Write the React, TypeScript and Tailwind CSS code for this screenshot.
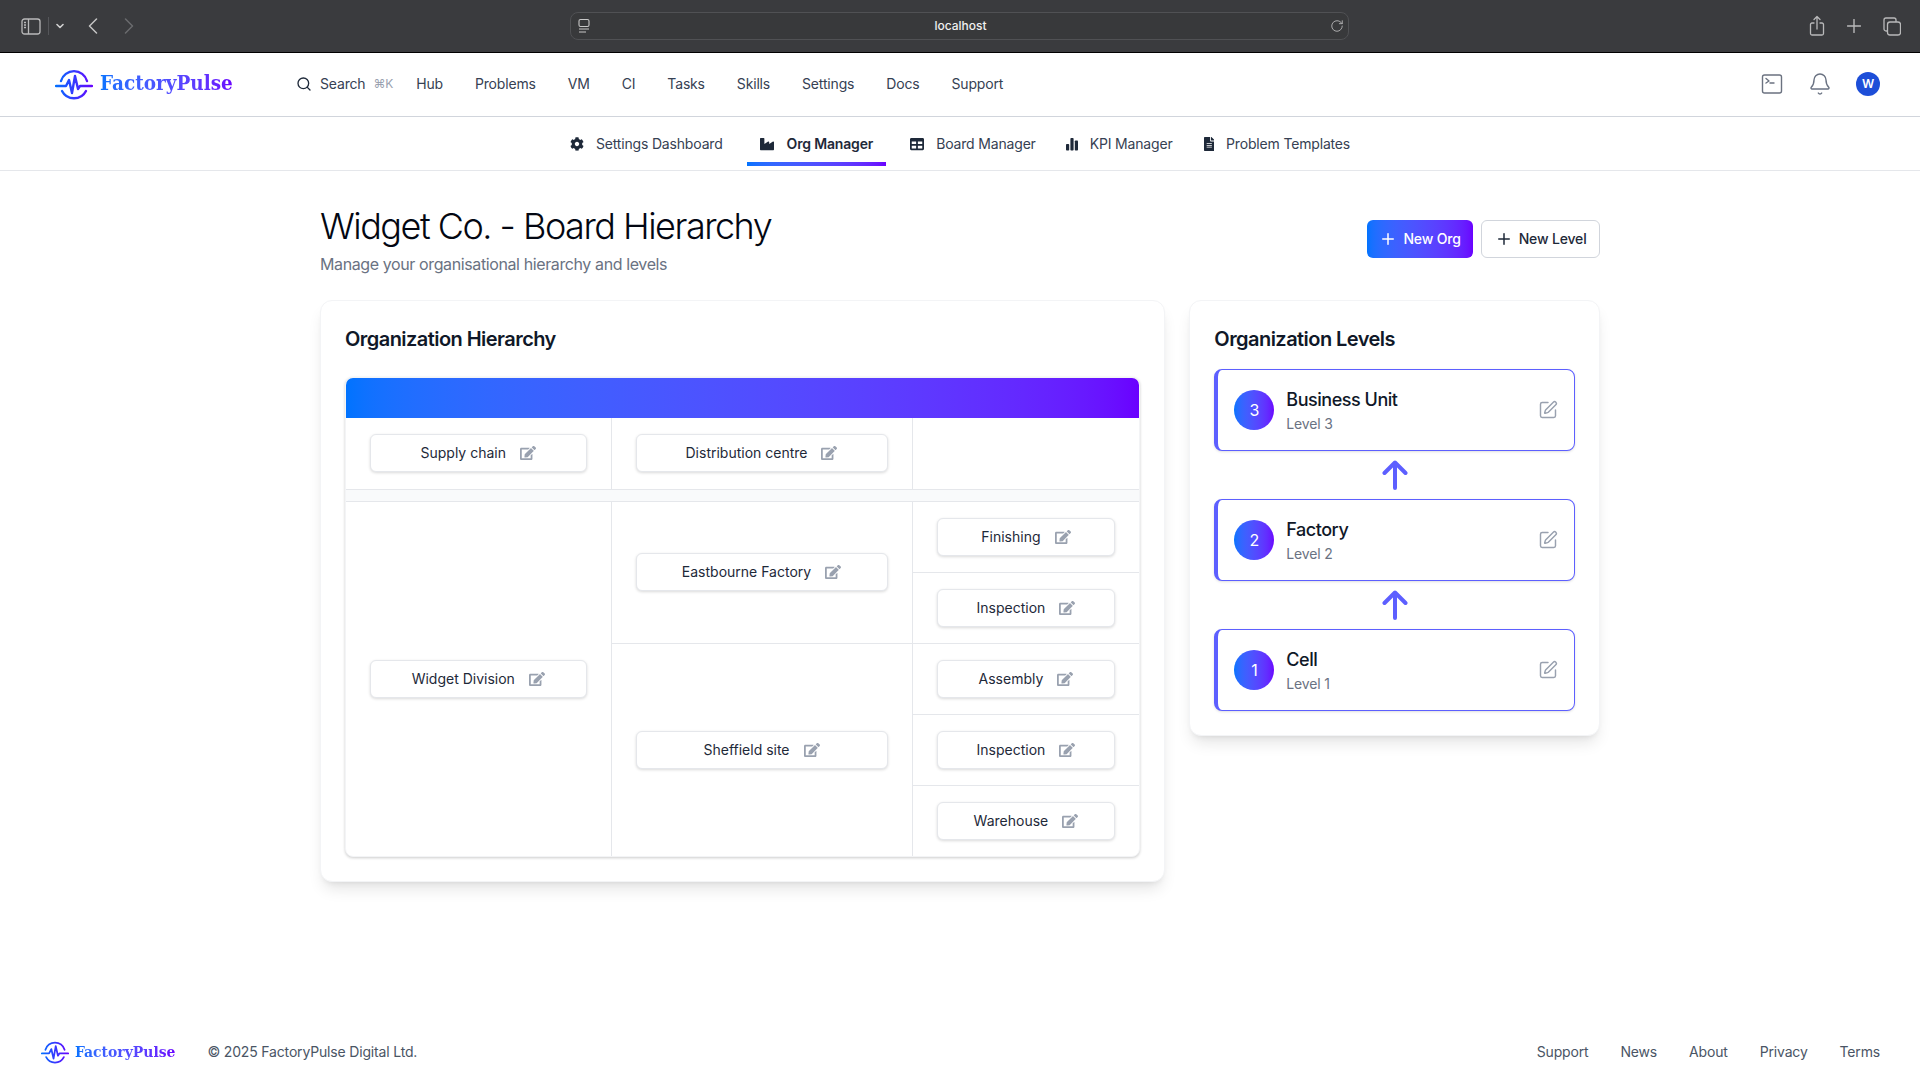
import React from "react";
import { FaCog, FaIndustry, FaTable, FaFileAlt, FaEdit } from "react-icons/fa";
import { Search, Plus, SquarePen, Bell, RotateCw } from "lucide-react";

const Logo = ({ w, h }: { w: number; h: number }) => (
  <svg width={w} height={h} viewBox="0 0 38 32" fill="none">
    <defs>
      <linearGradient id={`lg${w}`} x1="0" y1="0" x2="38" y2="0" gradientUnits="userSpaceOnUse">
        <stop offset="0" stopColor="#0073ff" />
        <stop offset="1" stopColor="#6a00ff" />
      </linearGradient>
    </defs>
    <g stroke={`url(#lg${w})`} strokeWidth="2.4" strokeLinecap="round" strokeLinejoin="round">
      <path d="M6 13 A13.5 13.5 0 0 1 32 13" />
      <path d="M7 23 A13.5 13.5 0 0 0 31 23" />
      <path d="M1 18 H11 L14 12 L17 25 L20 8 L23 21 L25 18 H37" />
    </g>
  </svg>
);

const Brand = ({ className }: { className: string }) => (
  <span
    className={`bg-gradient-to-r from-[#0073ff] to-[#6a00ff] bg-clip-text font-bold tracking-normal text-transparent [font-family:'DejaVu_Serif_Condensed','DejaVu_Serif',serif] ${className}`}
  >
    FactoryPulse
  </span>
);

const Node = ({ label }: { label: string }) => (
  <div className="flex h-[38px] items-center justify-center gap-[14px] rounded-md border border-gray-200 bg-white text-sm font-normal tracking-normal text-gray-800 shadow-[0_1px_3px_rgba(0,0,0,0.15)]">
    <span>{label}</span>
    <FaEdit className="size-4 text-gray-400" />
  </div>
);

const Level = ({ n, name }: { n: number; name: string }) => (
  <div className="flex items-center justify-between rounded-lg border border-l-4 border-[#5d5fff] bg-white p-4 shadow-sm">
    <div className="flex items-center gap-3">
      <div className="flex size-10 items-center justify-center rounded-full bg-gradient-to-r from-[#0073ff] to-[#6a00ff] text-base text-white">
        {n}
      </div>
      <div>
        <div className="text-lg leading-7 font-medium tracking-[-0.47px] text-gray-900">{name}</div>
        <div className="text-sm leading-5 text-gray-500">Level {n}</div>
      </div>
    </div>
    <SquarePen className="size-5 text-gray-400" strokeWidth={1.75} />
  </div>
);

const LevelArrow = () => (
  <div className="flex h-12 items-center justify-center">
    <svg width="26" height="30" viewBox="0 0 26 30" fill="none" stroke="#5d5fff" strokeWidth="4" strokeLinecap="round" strokeLinejoin="round">
      <path d="M13 28V3M2.5 13L13 2.5L23.5 13" />
    </svg>
  </div>
);

const td = "border-b border-r border-gray-200 px-6 align-middle h-[71px]";
const tdLast = "border-b border-gray-200 px-6 align-middle h-[71px]";

const Tab = ({
  icon,
  label,
  active,
  className,
}: {
  icon: React.ReactNode;
  label: string;
  active?: boolean;
  className: string;
}) => (
  <div className={`relative flex h-[45px] items-center text-sm ${className}`}>
    <span className="text-gray-800">{icon}</span>
    <span className={active ? "font-semibold text-gray-800" : "text-gray-700"}>{label}</span>
    {active && <span className="absolute right-0 bottom-0 left-0 h-1 bg-gradient-to-r from-[#0073ff] to-[#6a00ff]" />}
  </div>
);

const KpiIcon = () => (
  <svg width="12" height="14" viewBox="0 0 12 14" fill="currentColor" className="block">
    <rect x="0" y="7" width="3.2" height="6.5" rx="0.8" />
    <rect x="4.4" y="1" width="3.2" height="12.5" rx="0.8" />
    <rect x="8.8" y="3.5" width="3.2" height="10" rx="0.8" />
  </svg>
);

export default function App() {
  const nav = ["Hub", "Problems", "VM", "CI", "Tasks", "Skills", "Settings", "Docs", "Support"];
  return (
    <div className="flex min-h-screen flex-col bg-white tracking-[-0.17px] [font-family:Inter,sans-serif]">
      {/* browser chrome */}
      <div className="relative flex h-[53px] items-center border-b border-black bg-[#3a3b3e] text-[#b9b9ba]">
        <div className="flex w-[570px] items-center pl-[21px]">
          <svg width="20" height="17" viewBox="0 0 20 17" fill="none" stroke="currentColor" strokeWidth="1.3">
            <rect x="1" y="1" width="18" height="15" rx="2.5" />
            <path d="M7.5 1V16" />
            <path d="M3 4.5H5M3 7H5M3 9.5H5" />
          </svg>
          <span className="ml-[7px] h-[18px] w-px bg-[#55565a]" />
          <svg width="8" height="6" viewBox="0 0 8 6" fill="none" stroke="#d0d0d0" strokeWidth="1.6" strokeLinecap="round" strokeLinejoin="round" className="ml-[7px]">
            <path d="M1 1.5L4 4.5L7 1.5" />
          </svg>
          <svg width="10" height="16" viewBox="0 0 10 16" fill="none" stroke="#c4c4c4" strokeWidth="1.5" strokeLinecap="round" strokeLinejoin="round" className="ml-[24px]">
            <path d="M8.5 1L1.5 8L8.5 15" />
          </svg>
          <svg width="10" height="16" viewBox="0 0 10 16" fill="none" stroke="#6a6b6e" strokeWidth="1.5" strokeLinecap="round" strokeLinejoin="round" className="ml-[26px]">
            <path d="M1.5 1L8.5 8L1.5 15" />
          </svg>
        </div>
        <div className="flex h-7 w-[779px] items-center justify-between rounded-lg border border-[#505154] bg-[#38393b] pr-[4px] pl-[6px]">
          <svg width="14" height="16" viewBox="0 0 14 16" fill="none" stroke="#c8c8c8" strokeWidth="1.1">
            <rect x="2" y="1.5" width="10" height="7" rx="1.5" />
            <path d="M2 11H12M2 14H9" />
          </svg>
          <span className="text-xs font-medium tracking-normal text-[#f0f0f0]">localhost</span>
          <RotateCw className="size-3.5 text-[#b9b9ba]" strokeWidth={1.5} />
        </div>
        <div className="ml-auto flex items-center gap-[23px] pr-[19px]">
          <svg width="16" height="22" viewBox="0 0 16 22" fill="none" stroke="currentColor" strokeWidth="1.3" strokeLinecap="round" strokeLinejoin="round" className="translate-x-[2px]">
            <path d="M5 8H3a1.5 1.5 0 0 0-1.5 1.5v9A1.5 1.5 0 0 0 3 20h10a1.5 1.5 0 0 0 1.5-1.5v-9A1.5 1.5 0 0 0 13 8h-2" />
            <path d="M8 14V1.5M5 4.5l3-3 3 3" />
          </svg>
          <svg width="14" height="14" viewBox="0 0 14 14" stroke="currentColor" strokeWidth="1.4" strokeLinecap="round" className="translate-x-[1px]">
            <path d="M7 0.5V13.5M0.5 7H13.5" />
          </svg>
          <svg width="18" height="19" viewBox="0 0 18 19" fill="none" stroke="currentColor" strokeWidth="1.3">
            <rect x="4.5" y="5" width="13" height="13" rx="2.5" />
            <path d="M4.5 14H3a2 2 0 0 1-2-2V3a2 2 0 0 1 2-2h8a2 2 0 0 1 2 2v2" />
          </svg>
        </div>
      </div>

      {/* main nav */}
      <header className="flex h-[64px] items-center border-b border-gray-300 pr-[40px] pb-[1px] pl-[55px]">
        <div className="flex w-[241px] items-center">
          <Logo w={38} h={32} />
          <Brand className="ml-[7px] -translate-y-[1px] text-[20.5px]" />
        </div>
        <div className="flex items-center text-sm text-gray-700">
          <Search className="size-4 text-gray-800" />
          <span className="ml-2">Search</span>
          <span className="ml-2 text-xs text-gray-400">⌘K</span>
        </div>
        <nav className="ml-[23px] flex items-center gap-8 text-sm text-gray-700">
          {nav.map((n) => (
            <span key={n}>{n}</span>
          ))}
        </nav>
        <div className="ml-auto flex items-center gap-6">
          <svg width="24" height="24" viewBox="0 0 24 24" fill="none" stroke="#6b7280" strokeWidth="1.4" strokeLinecap="round" strokeLinejoin="round">
            <rect x="2.5" y="3" width="19" height="18" rx="2" />
            <path d="M6 6.5L9 9L6 11M10 11H14" />
          </svg>
          <Bell className="size-6 text-gray-500" strokeWidth={1.4} />
          <div className="flex size-6 items-center justify-center rounded-full bg-[#1d4ed8] text-xs font-semibold text-white">W</div>
        </div>
      </header>

      {/* sub nav */}
      <div className="flex h-[54px] justify-center gap-3 border-b border-gray-200 pt-[4px]">
        <Tab className="gap-3 px-3" icon={<FaCog className="block size-3.5" />} label="Settings Dashboard" />
        <Tab className="gap-[13px] px-[13px]" icon={<FaIndustry className="block size-3.5" />} label="Org Manager" active />
        <Tab className="gap-3 px-3" icon={<FaTable className="block size-3.5" />} label="Board Manager" />
        <Tab className="gap-3 pr-3 pl-[6px]" icon={<KpiIcon />} label="KPI Manager" />
        <Tab className="gap-3 pr-3 pl-[7px]" icon={<FaFileAlt className="block h-3.5 w-[10.5px]" />} label="Problem Templates" />
      </div>

      {/* content */}
      <main className="mx-auto w-[1280px] pt-[35px]">
        <div className="flex items-start justify-between">
          <div>
            <h1 className="text-4xl leading-10 font-light tracking-[-1.5px] text-gray-950">Widget Co. - Board Hierarchy</h1>
            <p className="mt-[6px] text-base leading-6 tracking-[-0.39px] text-gray-500">Manage your organisational hierarchy and levels</p>
          </div>
          <div className="mt-[14px] flex gap-2">
            <button className="flex h-[38px] items-center gap-1.5 rounded-md bg-gradient-to-r from-[#0073ff] to-[#6a00ff] px-[12.5px] text-sm font-medium text-white">
              <Plus className="size-[18px]" />
              New Org
            </button>
            <button className="flex h-[38px] items-center gap-1.5 rounded-md border border-gray-300 bg-white px-[12.5px] text-sm font-medium text-gray-800">
              <Plus className="size-[18px]" />
              New Level
            </button>
          </div>
        </div>

        <div className="mt-[24px] grid grid-cols-3 items-start gap-6">
          <section className="col-span-2 rounded-xl border border-gray-100 bg-white p-6 shadow-lg">
            <h2 className="text-xl leading-7 font-semibold tracking-[-0.55px] text-gray-900">Organization Hierarchy</h2>
            <div className="mt-[24px] overflow-hidden rounded-lg border border-gray-100 bg-white shadow-[0_1px_3px_rgba(0,0,0,0.2)]">
              <div className="h-10 bg-gradient-to-r from-[#0073ff] to-[#6a00ff]" />
              <table className="w-full table-fixed border-collapse">
                <colgroup>
                  <col className="w-[265px]" />
                  <col className="w-[301px]" />
                  <col />
                </colgroup>
                <tbody>
                  <tr>
                    <td className={td}><Node label="Supply chain" /></td>
                    <td className={td}><Node label="Distribution centre" /></td>
                    <td className={tdLast}></td>
                  </tr>
                  <tr>
                    <td colSpan={3} className="h-3 border-b border-gray-200 bg-gray-50"></td>
                  </tr>
                  <tr>
                    <td rowSpan={5} className="border-r border-gray-200 px-6 align-middle"><Node label="Widget Division" /></td>
                    <td rowSpan={2} className={td}><Node label="Eastbourne Factory" /></td>
                    <td className={tdLast}><Node label="Finishing" /></td>
                  </tr>
                  <tr>
                    <td className={tdLast}><Node label="Inspection" /></td>
                  </tr>
                  <tr>
                    <td rowSpan={3} className="border-r border-gray-200 px-6 align-middle"><Node label="Sheffield site" /></td>
                    <td className={tdLast}><Node label="Assembly" /></td>
                  </tr>
                  <tr>
                    <td className={tdLast}><Node label="Inspection" /></td>
                  </tr>
                  <tr>
                    <td className="h-[71px] px-6 align-middle"><Node label="Warehouse" /></td>
                  </tr>
                </tbody>
              </table>
            </div>
          </section>

          <section className="rounded-xl border border-gray-100 bg-white p-6 shadow-lg">
            <h2 className="mb-4 text-xl leading-7 font-semibold tracking-[-0.55px] text-gray-900">Organization Levels</h2>
            <Level n={3} name="Business Unit" />
            <LevelArrow />
            <Level n={2} name="Factory" />
            <LevelArrow />
            <Level n={1} name="Cell" />
          </section>
        </div>
      </main>

      {/* footer */}
      <footer className="mt-auto flex h-[56px] items-center justify-between pr-[40px] pl-[41px] text-sm text-gray-600">
        <div className="flex items-center">
          <Logo w={28} h={24} />
          <Brand className="ml-[6px] text-[15.5px]" />
          <span className="ml-8">© 2025 FactoryPulse Digital Ltd.</span>
        </div>
        <div className="flex gap-8">
          {["Support", "News", "About", "Privacy", "Terms"].map((l) => (
            <span key={l}>{l}</span>
          ))}
        </div>
      </footer>
    </div>
  );
}
